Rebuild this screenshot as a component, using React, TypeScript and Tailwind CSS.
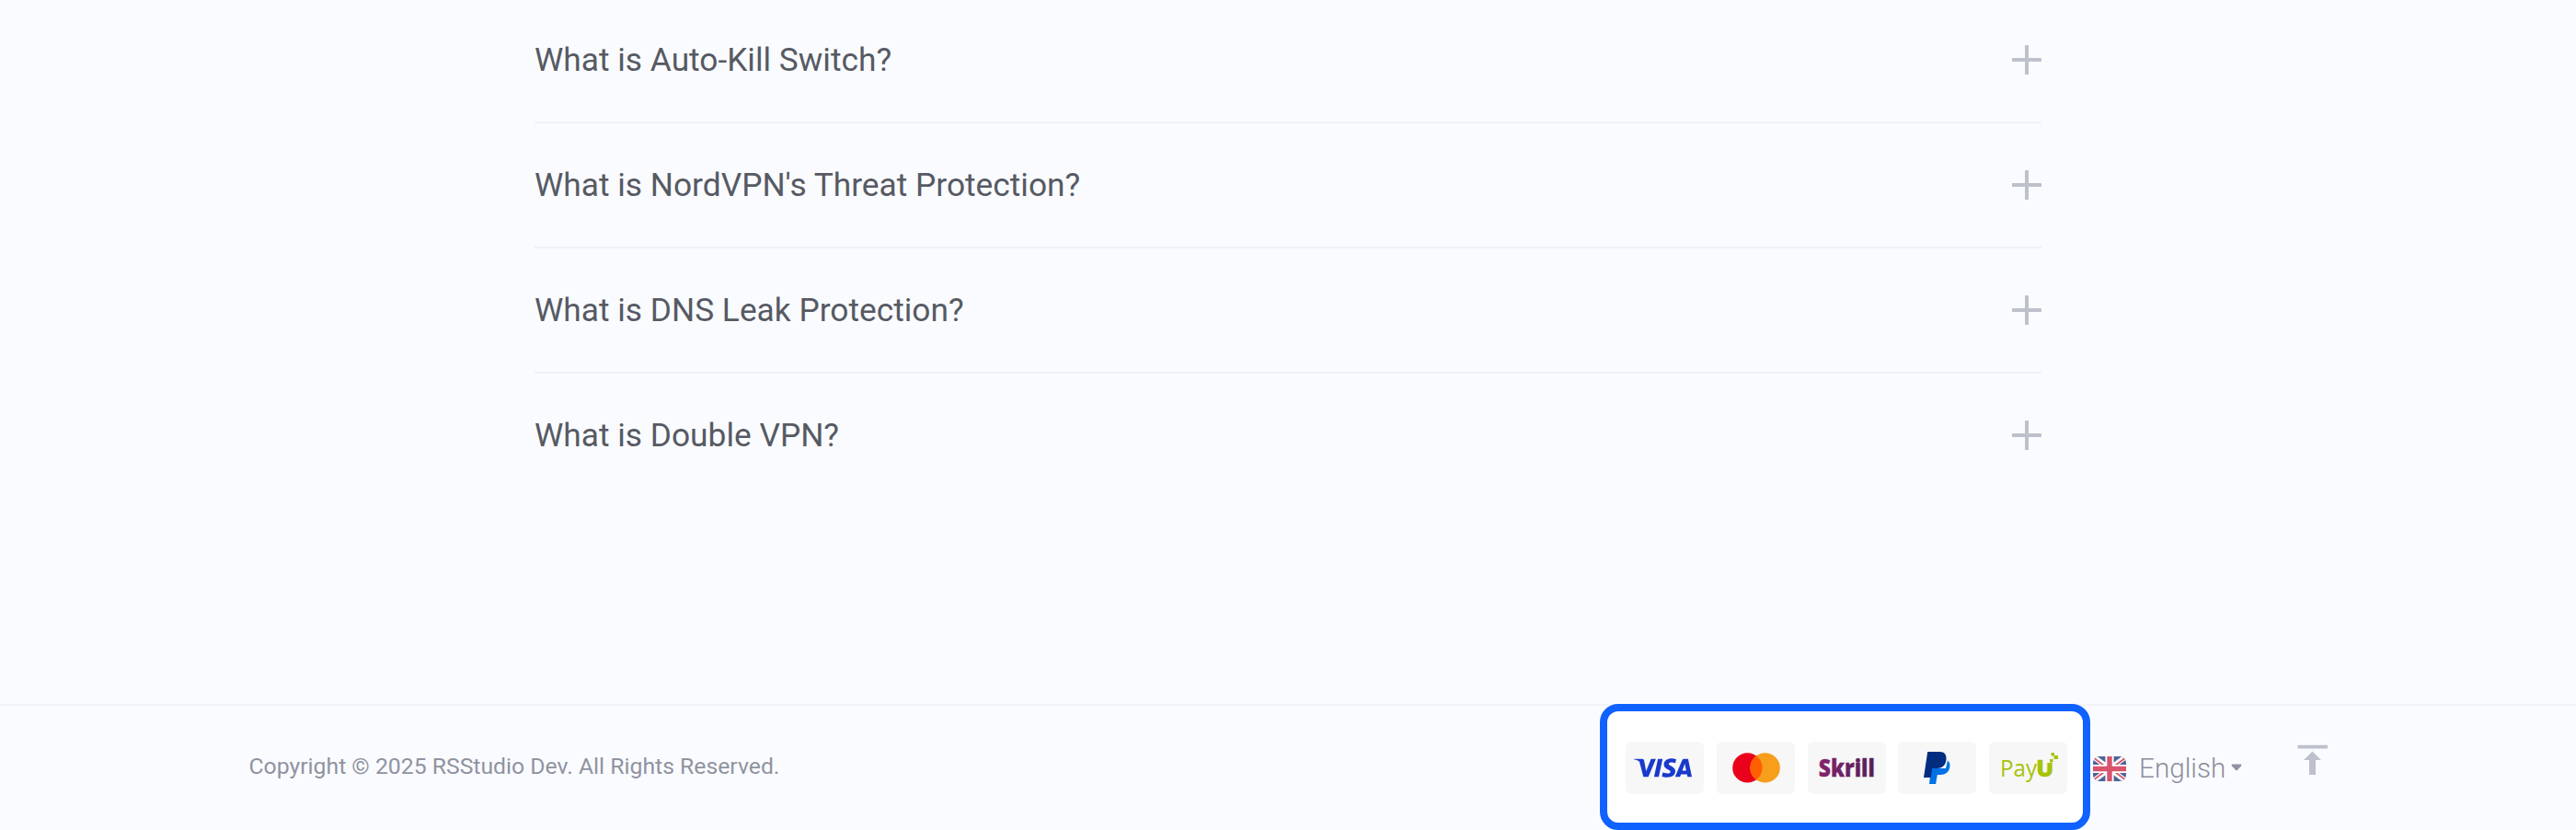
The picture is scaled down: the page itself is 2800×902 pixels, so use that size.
import { SiVisa } from "react-icons/si";

const questions = [
  "What is Auto-Kill Switch?",
  "What is NordVPN's Threat Protection?",
  "What is DNS Leak Protection?",
  "What is Double VPN?",
];

function Plus() {
  return (
    <svg className="size-8 shrink-0" viewBox="0 0 32 32" fill="#bdc1cb">
      <rect x="14" width="4" height="32" rx="0.5" />
      <rect y="14" width="32" height="4" rx="0.5" />
    </svg>
  );
}

function Visa() {
  return <SiVisa className="mr-[4px] size-[63px] text-[#1a3acc]" />;
}

function Mastercard() {
  return (
    <svg className="ml-[2px] h-[33px] w-[52px]" viewBox="0 0 52 33">
      <circle cx="16.4" cy="16.4" r="16.2" fill="#eb001b" />
      <circle cx="35.6" cy="16.4" r="16.2" fill="#f79e1b" />
      <path d="M26 3.35a16.2 16.2 0 0 1 0 26.1a16.2 16.2 0 0 1 0-26.1z" fill="#ff5f00" />
    </svg>
  );
}

function Skrill() {
  return (
    <svg className="h-[57px] w-[85px]" viewBox="0 0 85 57">
      <defs>
        <linearGradient id="skrill" x1="12" x2="72" y1="0" y2="0" gradientUnits="userSpaceOnUse">
          <stop offset="0" stopColor="#83226b" />
          <stop offset="1" stopColor="#552159" />
        </linearGradient>
      </defs>
      <text
        x="11.8"
        y="38.4"
        fontSize="26"
        textLength="61"
        lengthAdjust="spacingAndGlyphs"
        fill="url(#skrill)"
        stroke="url(#skrill)"
        strokeWidth="0.3"
        className="font-['Open_Sans'] font-extrabold"
      >
        Skrill
      </text>
    </svg>
  );
}

function Paypal() {
  return (
    <svg className="h-[36px] w-[29px]" viewBox="0 0 29 36">
      <path d="M8 18h16l2-8.500c2.400 1.700 3 4.600 2.200 8c-1.200 4.800-4.700 7.400-9.700 7.400h-3.700l-1.700 10.100H6z" fill="#0072e5" />
      <path d="M4.200 0h13.300c5.200 0 7.300 3 7 8.200c-.4 6-4.200 9.700-9.700 9.700H9.300L7.700 28H0z" fill="#012c80" />
    </svg>
  );
}

function PayU() {
  return (
    <svg className="h-[57px] w-[85px]" viewBox="0 0 85 57" fill="#a6c307">
      <text
        x="12"
        y="37.600"
        fontSize="25"
        textLength="40"
        lengthAdjust="spacingAndGlyphs"
        className="font-['Open_Sans'] font-medium"
      >
        Pay
      </text>
      <text
        x="51.200"
        y="37.600"
        fontSize="25"
        textLength="19"
        lengthAdjust="spacingAndGlyphs"
        stroke="#a6c307"
        strokeWidth="0.5"
        className="font-['Open_Sans'] font-extrabold"
      >
        U
      </text>
      <rect x="62.500" y="18.500" width="7" height="4.500" fill="#f7f7f8" />
      <rect x="66" y="19" width="3.500" height="3.500" />
      <rect x="70.500" y="15" width="4.500" height="4" />
      <rect x="67.500" y="12" width="3.500" height="3.500" />
    </svg>
  );
}

function Flag() {
  return (
    <svg className="h-[27px] w-9 rounded-[7px]" viewBox="0 0 36 27">
      <rect width="36" height="27" fill="#4d6397" />
      <path d="M0 0L36 27M36 0L0 27" stroke="#fff" strokeWidth="5.500" />
      <path d="M0 1L12 10M24 17L36 26M36 1L24 10M12 17L0 26" stroke="#d9536c" strokeWidth="1.800" />
      <path d="M18 0v27M0 13.500h36" stroke="#fff" strokeWidth="9.200" />
      <path d="M18 0v27M0 13.500h36" stroke="#d9536c" strokeWidth="5.400" />
    </svg>
  );
}

const payments = [
  { name: "visa", Logo: Visa },
  { name: "mastercard", Logo: Mastercard },
  { name: "skrill", Logo: Skrill },
  { name: "paypal", Logo: Paypal },
  { name: "payu", Logo: PayU },
];

export default function App() {
  return (
    <div className="flex h-[902px] w-[2800px] flex-col overflow-hidden bg-[#fafbff] font-[Roboto,sans-serif]">
      <main className="ml-[581px] h-[765px] w-[1638px] shrink-0">
        {questions.map((q, i) => (
          <div
            key={q}
            className={
              "flex items-center justify-between " +
              (i === 0 ? "h-[134px] border-b-2 border-[#f0f1f4] pb-[2px]" : i < 3 ? "h-[136px] border-b-2 border-[#f0f1f4]" : "h-[134px]")
            }
          >
            <h3 className="text-[35.3px] leading-[42px] text-[#565a63]">{q}</h3>
            <Plus />
          </div>
        ))}
      </main>
      <footer className="flex h-[137px] shrink-0 items-start bg-[linear-gradient(#f2f3f6,#f2f3f6)] bg-[length:100%_2px] bg-no-repeat pl-[270.5px]">
        <p className="mt-[54px] w-[1468.5px] text-[24.75px] leading-[28px] text-[#8f93a0]">
          Copyright © 2025 RSStudio Dev. All Rights Reserved.
        </p>
        <div className="flex h-[137px] w-[533px] items-start gap-[13.75px] rounded-[20px] border-8 border-[#0f62fe] bg-white pt-[33px] pl-5">
          {payments.map(({ name, Logo }) => (
            <div key={name} className="flex h-[57px] w-[85px] items-center justify-center rounded-[6px] bg-[#f7f7f8]">
              <Logo />
            </div>
          ))}
        </div>
        <div className="mt-[57px] ml-[3px] flex items-start">
          <Flag />
          <span className="-mt-[3px] ml-[14px] text-[29.7px] leading-[32px] font-light text-[#8a8e9c]">English</span>
          <svg className="mt-[8px] ml-[6px] h-[8px] w-[12px]" viewBox="0 0 12 8" fill="#8f93a2">
            <path d="M1 0.500h10q1 .8 0 1.900L6.800 7q-.8.600-1.600 0L1 2.400Q0 1.300 1 .5z" />
          </svg>
        </div>
        <svg className="mt-[44px] ml-[60px] h-[34px] w-[34px]" viewBox="0 0 34 34" fill="#bdc1cb">
          <rect x="0.500" y="0.700" width="32.500" height="3.800" rx="0.500" />
          <path d="M16.500 7.500L26 17h-6v16h-7V17H7z" />
        </svg>
      </footer>
    </div>
  );
}
